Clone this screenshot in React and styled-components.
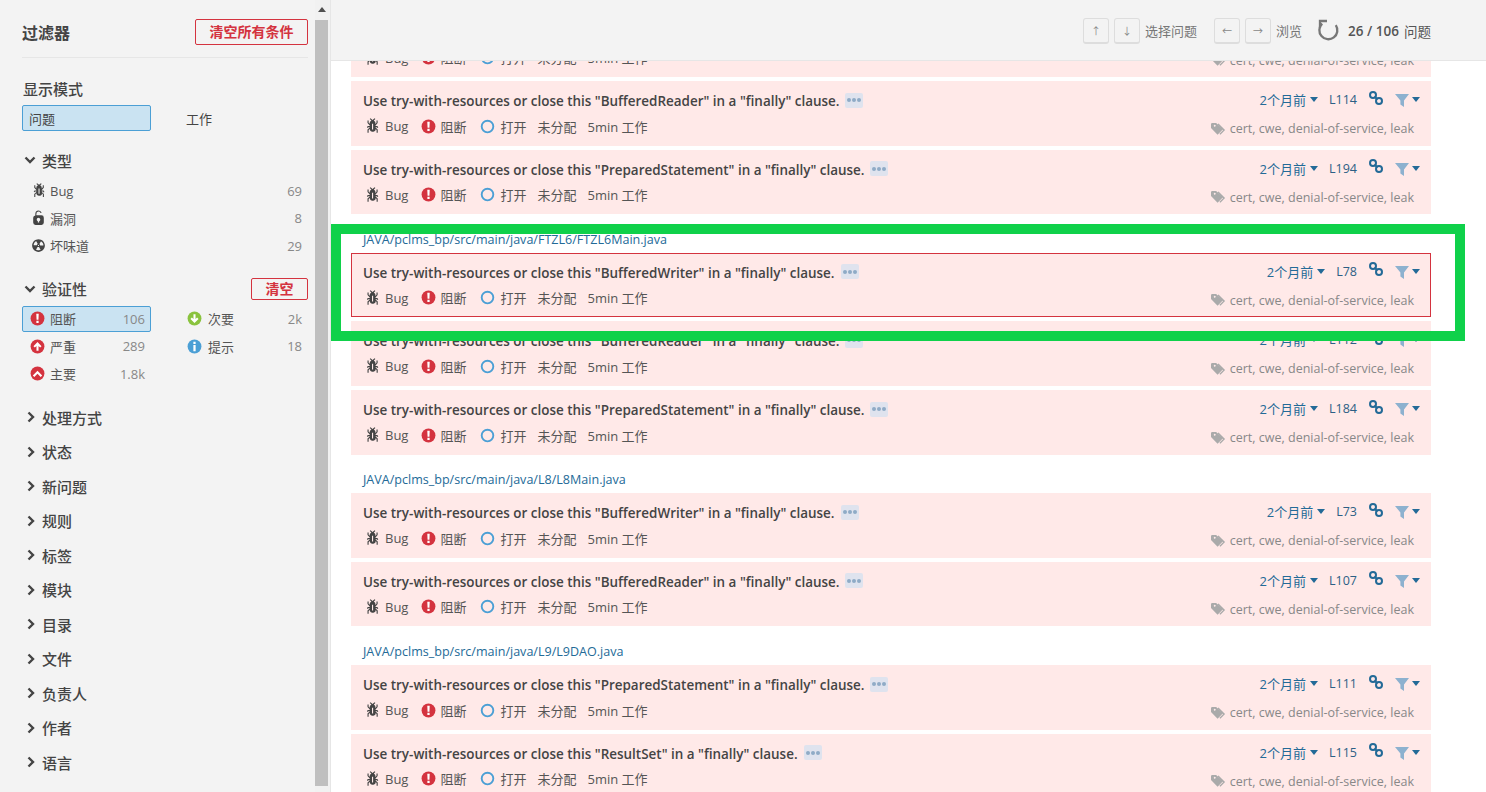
import React from 'react';
import styled, { createGlobalStyle } from 'styled-components';

const Global = createGlobalStyle`
  html, body { margin: 0; padding: 0; height: 100%; overflow: hidden; background: #fff; }
  body { font-family: "Open Sans", "Noto Sans CJK SC", sans-serif; font-size: 13px; color: #444; }
  * { box-sizing: border-box; }
`;

const Page = styled.div`display: flex; width: 1486px; height: 792px; overflow: hidden;`;
const Sidebar = styled.aside`display: flex; flex: 0 0 331px; height: 792px; background: #f3f3f3; border-right: 1px solid #e6e6e6;`;
const Panel = styled.div`flex: 0 0 315px; padding: 19px 7px 0 22px;`;
const FakeBar = styled.div`flex: 1; background: #f1f1f1; display: flex; flex-direction: column; align-items: flex-start;`;
const BarArrow = styled.div`
  width: 13px; height: 20px; display: flex; justify-content: center; padding-top: 7px;
  &::before { content: ""; border: 4px solid transparent; border-top: 0; border-bottom: 5px solid #505050; height: 0; }
`;
const BarThumb = styled.div`width: 13px; height: 766px; background: #bfbfbf;`;

const FilterHead = styled.div`display: flex; justify-content: space-between; align-items: flex-start; height: 39px; border-bottom: 1px solid #e6e6e6;`;
const FilterTitle = styled.h2`margin: 0; padding-top: 1px; font-size: 16px; font-weight: 600; color: #444; line-height: 26px;`;
const ClearBtn = styled.button`
  font-family: inherit; font-size: 14px; font-weight: 600; color: #d4333f; background: transparent;
  border: 1px solid #d4333f; border-radius: 2px; padding: 0; width: ${p => p.$small ? 57 : 113}px; height: ${p => p.$small ? 22 : 26}px; line-height: 1;
`;
const ModeTitle = styled.div`font-size: 15px; font-weight: 500; color: #444; line-height: 20px; margin: 21px 0 6px 1px;`;
const ModeRow = styled.div`display: grid; grid-template-columns: 129px 1fr;`;
const FacetCell = styled.div`
  display: flex; align-items: center; height: 26px; padding: 0 6px;
  border: 1px solid ${p => p.$active ? '#4b9fd5' : 'transparent'}; border-radius: 2px;
  background: ${p => p.$active ? '#cae3f2' : 'transparent'}; color: #444;
`;
const WorkCell = styled(FacetCell)`padding-left: 34px;`;
const Head = styled.div`display: flex; align-items: center; height: ${p => p.$h || 22}px; margin-top: ${p => p.$mt || 0}px; font-size: 15px; font-weight: 500; color: #444;`;
const HeadLabel = styled.span`margin-left: ${p => p.$ml || 6}px; flex: 1;`;
const OpenChevron = styled.svg`width: 12px; height: 8px; margin-left: 2px; fill: none; stroke: #444; stroke-width: 2.4;`;
const ClosedChevron = styled.svg`width: 8px; height: 12px; margin-left: 5px; fill: none; stroke: #444; stroke-width: 2.4;`;
const TypeList = styled.div`display: flex; flex-direction: column; margin-top: 6px;`;
const TypeRow = styled.div`display: flex; align-items: center; height: 27.5px; padding: 0 6px 0 8px;`;
const TypeIcon = styled.svg`width: 17px; height: 17px; margin-right: 3px; fill: #444; flex: none;`;
const SevIcon = styled.svg`width: 15px; height: 15px; margin-right: ${p => p.$right ? 6 : 5}px; flex: none;`;
const RowLabel = styled.span`flex: 1; color: #555; white-space: nowrap;`;
const Count = styled.span`color: #888; white-space: nowrap;`;
const SevGrid = styled.div`display: grid; grid-template-columns: 129px 157px; grid-auto-rows: 27.5px; margin-top: 6px;`;
const SevCell = styled.div`
  display: flex; align-items: center; height: 26px; border-radius: 2px; padding-right: 5px;
  border: 1px solid ${p => p.$active ? '#4b9fd5' : 'transparent'}; background: ${p => p.$active ? '#cae3f2' : 'transparent'};
  padding-left: ${p => p.$right ? 35 : 7}px;
`;
const SevList = styled.div`margin-top: 12px; display: flex; flex-direction: column;`;
const Main = styled.main`position: relative; flex: 1; height: 792px; overflow: hidden; background: #fff;`;
const Toolbar = styled.div`
  position: absolute; top: 0; left: 0; right: 0; height: 61px; background: #f3f3f3; border-bottom: 1px solid #e6e6e6;
  display: flex; align-items: center; justify-content: flex-end; padding: 1px 55px 0 0; z-index: 2; color: #777;
`;
const KeyBtn = styled.span`
  width: 26px; height: 26px; margin-right: 5px; display: flex; align-items: center; justify-content: center;
  border: 1px solid #ddd; border-bottom-width: 2px; border-radius: 3px; background: #f3f3f3; font-size: 10px; color: #888;
`;
const ToolLabel = styled.span`margin-right: ${p => p.$mr || 0}px; color: ${p => p.$dark ? '#555' : '#777'}; font-size: ${p => p.$dark ? 13.5 : 13}px;`;
const Reload = styled.svg`width: 24px; height: 24px; margin-right: 7px; fill: none; stroke: #777; stroke-width: 2.3;`;
const Total = styled.strong`font-weight: 600; font-size: 13.5px; color: #555; margin-right: 5px;`;
const List = styled.div`padding: 12.6px 55px 0 20px;`;
const PathLine = styled.div`height: 34.7px; padding: 13.5px 0 0 12px; line-height: 16px; font-size: 12.55px; color: #236a97; white-space: nowrap;`;
const Card = styled.div`
  height: 64.55px; margin-bottom: 4px; padding: 10px 10px 0 11px; background: #ffe9e8;
  border: 1px solid ${p => p.$selected ? '#d4333f' : 'transparent'};
`;
const CardTop = styled.div`display: flex; align-items: center; height: 18px;`;
const Title = styled.div`flex: 1; font-weight: 600; font-size: 13.45px; color: #444; white-space: nowrap; display: flex; align-items: center;`;
const Dots = styled.span`
  display: inline-flex; align-items: center; justify-content: center; gap: 1px; width: 18px; height: 15px; margin: -2px 0 0 6px; background: #dfe3ee; border-radius: 2px;
  & i { width: 4px; height: 4px; border-radius: 50%; background: #8fabc6; }
`;
const Age = styled.span`color: #236a97; white-space: nowrap; margin: 0 4px 3px 0;`;
const Caret = styled.svg`width: 8px; height: 5px; fill: #236a97; flex: none; margin-right: ${p => p.$mr || 0}px; margin-bottom: 3px;`;
const LineNo = styled.span`color: #2c5f85; font-size: 12.5px; margin: 0 11px 3px 0;`;
const LinkIcon = styled.svg`width: 16px; height: 16px; flex: none; margin: 0 10px 7px 0; fill: none; stroke: #236a97; stroke-width: 2;`;
const FilterIcon = styled.svg`width: 16px; height: 16px; flex: none; margin: 0 2px 2px 0; fill: #8db1cf;`;
const CardBottom = styled.div`display: flex; align-items: center; height: 20px; margin-top: 6px; justify-content: space-between;`;
const Meta = styled.div`display: flex; align-items: center; color: #555;`;
const MetaItem = styled.span`display: flex; align-items: center; margin-right: ${p => p.$mr}px; white-space: nowrap;`;
const MetaIcon = styled.svg`width: ${p => p.$s || 15}px; height: ${p => p.$s || 15}px; margin-right: ${p => p.$g || 4}px; flex: none;`;
const Tags = styled.div`display: flex; align-items: center; color: #888; font-size: 12.5px; padding: 5px 6px 0 0; white-space: nowrap;`;
const TagIcon = styled.svg`width: 15px; height: 14px; margin-right: 4px; fill: #aaa;`;
const Frame = styled.div`position: absolute; left: 0; top: 224px; width: 1134px; height: 117px; border: 10px solid #0fd14a; z-index: 3; pointer-events: none;`;

const bug = 'M11 9h1.3l.5.8.8-.5-.8-1.3H11v-.3l2-2.3V3h-1v2l-1 1.2V5c-.1-.8-.7-1.5-1.4-1.9L11 1.8l-.7-.7-1.8 1.6-1.8-1.6-.7.7 1.5 1.3C6.7 3.5 6.1 4.2 6 5v1.1L5 5V3H4v2.3l2 2.3V8H4.2l-.7 1.2.8.5.4-.7H6v.3l-2 1.9V14h1v-2.4l1-1C6 12 7.1 13 8.4 13h.8c.7 0 1.4-.3 1.8-.9.3-.4.3-.9.2-1.4l.9.9V14h1v-2.8l-2-1.9V9zm-2 2H8V6h1v5z';
const vuln = 'M10.8 5H6V3.9a2.28 2.28 0 0 1 2-2.5 2.22 2.22 0 0 1 1.8 1.2.48.48 0 0 0 .7.2.48.48 0 0 0 .2-.7A3 3 0 0 0 8 .4a3.34 3.34 0 0 0-3 3.5v1.2a2.16 2.16 0 0 0-2 2.1v4.6a2.22 2.22 0 0 0 2.2 2.2h5.6a2.22 2.22 0 0 0 2.2-2.2V7.2A2.22 2.22 0 0 0 10.8 5zm-2.2 5.5v1.2H7.4v-1.2a1.66 1.66 0 0 1-1.1-1.6A1.75 1.75 0 0 1 8 7.2a1.71 1.71 0 0 1 .6 3.3z';
const smell = 'M8 2C4.7 2 2 4.7 2 8s2.7 6 6 6 6-2.7 6-6-2.7-6-6-6zm-.5 5.5h.9v.9h-.9v-.9zm-3.8.2c-.1 0-.2-.1-.2-.2 0-.4.1-1.2.6-2S5.3 4.2 5.6 4c.2 0 .3 0 .3.1l1.3 2.3c0 .1 0 .2-.1.2-.1.2-.2.3-.3.5-.1.2-.2.4-.2.5 0 .1-.1.2-.2.2l-2.7-.1zM9.9 12c-.3.2-1.1.5-2 .5-.9 0-1.7-.3-2-.5-.1 0-.1-.2-.1-.3l1.3-2.3c0-.1.1-.1.2-.1.2.1.3.1.5.1s.4 0 .5-.1c.1 0 .2 0 .2.1l1.3 2.3c.2.2.2.3.1.3zm2.5-4.1L9.7 8c-.1 0-.2-.1-.2-.2 0-.2-.1-.4-.2-.5 0-.2-.2-.3-.3-.5-.1 0-.1-.1-.1-.2l1.3-2.3c.1-.1.2-.1.3-.1.3.2 1 .7 1.5 1.5s.6 1.6.6 2c0 .1-.1.2-.2.2z';

function SevGlyph({ kind }) {
  const fills = { blocker: '#d4333f', critical: '#d4333f', major: '#d4333f', minor: '#8ac33e', info: '#4b9fd5' };
  return (
    <>
      <circle cx="8" cy="8" r="7.4" fill={fills[kind]} />
      {kind === 'blocker' && <path d="M6.7 3h2.6l-.3 6.2H7zM6.8 10.3h2.4v2.4H6.8z" fill="#fff" />}
      {kind === 'critical' && <path d="M8 3.2l4.3 4.4-1.5 1.4-1.7-1.6V12.6H6.900V7.400L5.200 9 3.700 7.600z" fill="#fff" />}
      {kind === 'major' && <path d="M8 5l5 5-1.600 1.600L8 8.200l-3.400 3.400L3 10z" fill="#fff" />}
      {kind === 'minor' && <path d="M8 12.800L3.700 8.400 5.200 7l1.700 1.600V3.400h2.200v5.200L10.800 7l1.500 1.400z" fill="#fff" />}
      {kind === 'info' && <path d="M6.800 3h2.400v2.300H6.800zM6.800 6.500h2.400V13H6.800z" fill="#fff" />}
    </>
  );
}

const types = [['Bug', bug, '69'], ['漏洞', vuln, '8'], ['坏味道', smell, '29']];
const sevRows = [
  ['阻断', 'blocker', '106', true], ['次要', 'minor', '2k'],
  ['严重', 'critical', '289'], ['提示', 'info', '18'],
  ['主要', 'major', '1.8k'],
];
const closed = ['处理方式', '状态', '新问题', '规则', '标签', '模块', '目录', '文件', '负责人', '作者', '语言'];

const groups = [
  { cards: [['BufferedReader', 'L114'], ['BufferedReader', 'L114'], ['PreparedStatement', 'L194']] },
  { path: 'JAVA/pclms_bp/src/main/java/FTZL6/FTZL6Main.java', cards: [['BufferedWriter', 'L78', 's'], ['BufferedReader', 'L112'], ['PreparedStatement', 'L184']] },
  { path: 'JAVA/pclms_bp/src/main/java/L8/L8Main.java', cards: [['BufferedWriter', 'L73'], ['BufferedReader', 'L107']] },
  { path: 'JAVA/pclms_bp/src/main/java/L9/L9DAO.java', cards: [['PreparedStatement', 'L111'], ['ResultSet', 'L115']] },
];

function IssueCard({ name, line, selected }) {
  return (
    <Card $selected={selected}>
      <CardTop>
        <Title>Use try-with-resources or close this "{name}" in a "finally" clause.<Dots><i /><i /><i /></Dots></Title>
        <Age>2个月前</Age>
        <Caret $mr={11} viewBox="0 0 8 5"><path d="M0 0h8L4 5z" /></Caret>
        <LineNo>{line}</LineNo>
        <LinkIcon viewBox="0 0 16 16"><circle cx="5" cy="5" r="3" /><circle cx="11" cy="11" r="3" /><path d="M6.500 6.500l3 3" /></LinkIcon>
        <FilterIcon viewBox="0 0 16 16"><path d="M1 2h14L10 8.500V15l-3.600-2.500V8.500z" /></FilterIcon>
        <Caret viewBox="0 0 8 5"><path d="M0 0h8L4 5z" /></Caret>
      </CardTop>
      <CardBottom>
        <Meta>
          <MetaItem $mr={13}><MetaIcon $s={18} viewBox="0 0 16 16" fill="#444"><path d={bug} /></MetaIcon>Bug</MetaItem>
          <MetaItem $mr={14}><MetaIcon viewBox="0 0 16 16"><SevGlyph kind="blocker" /></MetaIcon>阻断</MetaItem>
          <MetaItem $mr={11}><MetaIcon $g={5} viewBox="0 0 16 16" fill="none"><circle cx="8" cy="8" r="6.200" stroke="#4b9fd5" strokeWidth="2" /></MetaIcon>打开</MetaItem>
          <MetaItem $mr={11}>未分配</MetaItem>
          <MetaItem $mr={0}>5min 工作</MetaItem>
        </Meta>
        <Tags>
          <TagIcon viewBox="0 0 16 14"><path d="M0 1.500V6l7 7 5.500-5.500-7-7H1z M3 3.500a1 1 0 1 1 0 .1zM8 1l7 7-5 5-1-1 4-4-6-6z" /></TagIcon>
          cert, cwe, denial-of-service, leak
        </Tags>
      </CardBottom>
    </Card>
  );
}

export default function App() {
  return (
    <Page>
      <Global />
      <Sidebar>
        <Panel>
          <FilterHead><FilterTitle>过滤器</FilterTitle><ClearBtn>清空所有条件</ClearBtn></FilterHead>
          <ModeTitle>显示模式</ModeTitle>
          <ModeRow><FacetCell $active>问题</FacetCell><WorkCell>工作</WorkCell></ModeRow>
          <Head $mt={18}>
            <OpenChevron viewBox="0 0 12 8"><path d="M1.500 1.500L6 6l4.500-4.500" /></OpenChevron>
            <HeadLabel $ml={6}>类型</HeadLabel>
          </Head>
          <TypeList>
            {types.map(([l, d, c]) => (
              <TypeRow key={l}><TypeIcon viewBox="0 0 16 16"><path d={d} /></TypeIcon><RowLabel>{l}</RowLabel><Count>{c}</Count></TypeRow>
            ))}
          </TypeList>
          <Head $mt={18} $h={22}>
            <OpenChevron viewBox="0 0 12 8"><path d="M1.500 1.500L6 6l4.500-4.500" /></OpenChevron>
            <HeadLabel $ml={6}>验证性</HeadLabel>
            <ClearBtn $small>清空</ClearBtn>
          </Head>
          <SevGrid>
            {sevRows.map(([l, k, c, a], i) => (
              <SevCell key={l} $active={a} $right={i === 1 || i === 3}>
                <SevIcon $right={i === 1 || i === 3} viewBox="0 0 16 16"><SevGlyph kind={k} /></SevIcon>
                <RowLabel>{l}</RowLabel><Count>{c}</Count>
              </SevCell>
            ))}
          </SevGrid>
          <SevList>
            {closed.map(c => (
              <Head key={c} $h={34.5}>
                <ClosedChevron viewBox="0 0 8 12"><path d="M1.500 1.500L6 6l-4.500 4.500" /></ClosedChevron>
                <HeadLabel $ml={7}>{c}</HeadLabel>
              </Head>
            ))}
          </SevList>
        </Panel>
        <FakeBar><BarArrow /><BarThumb /></FakeBar>
      </Sidebar>
      <Main>
        <Toolbar>
          <KeyBtn>↑</KeyBtn><KeyBtn>↓</KeyBtn><ToolLabel $mr={17}>选择问题</ToolLabel>
          <KeyBtn>←</KeyBtn><KeyBtn>→</KeyBtn><ToolLabel $mr={15}>浏览</ToolLabel>
          <Reload viewBox="0 0 24 24"><path d="M5.200 4.700A9 9 0 1 0 18.800 6.200" /><path d="M10 2H3v7" /></Reload>
          <Total>26 / 106</Total><ToolLabel $dark>问题</ToolLabel>
        </Toolbar>
        <List>
          {groups.map((g, i) => (
            <React.Fragment key={i}>
              {g.path && <PathLine>{g.path}</PathLine>}
              {g.cards.map((c, j) => <IssueCard key={j} name={c[0]} line={c[1]} selected={c[2] === 's'} />)}
            </React.Fragment>
          ))}
        </List>
        <Frame />
      </Main>
    </Page>
  );
}
